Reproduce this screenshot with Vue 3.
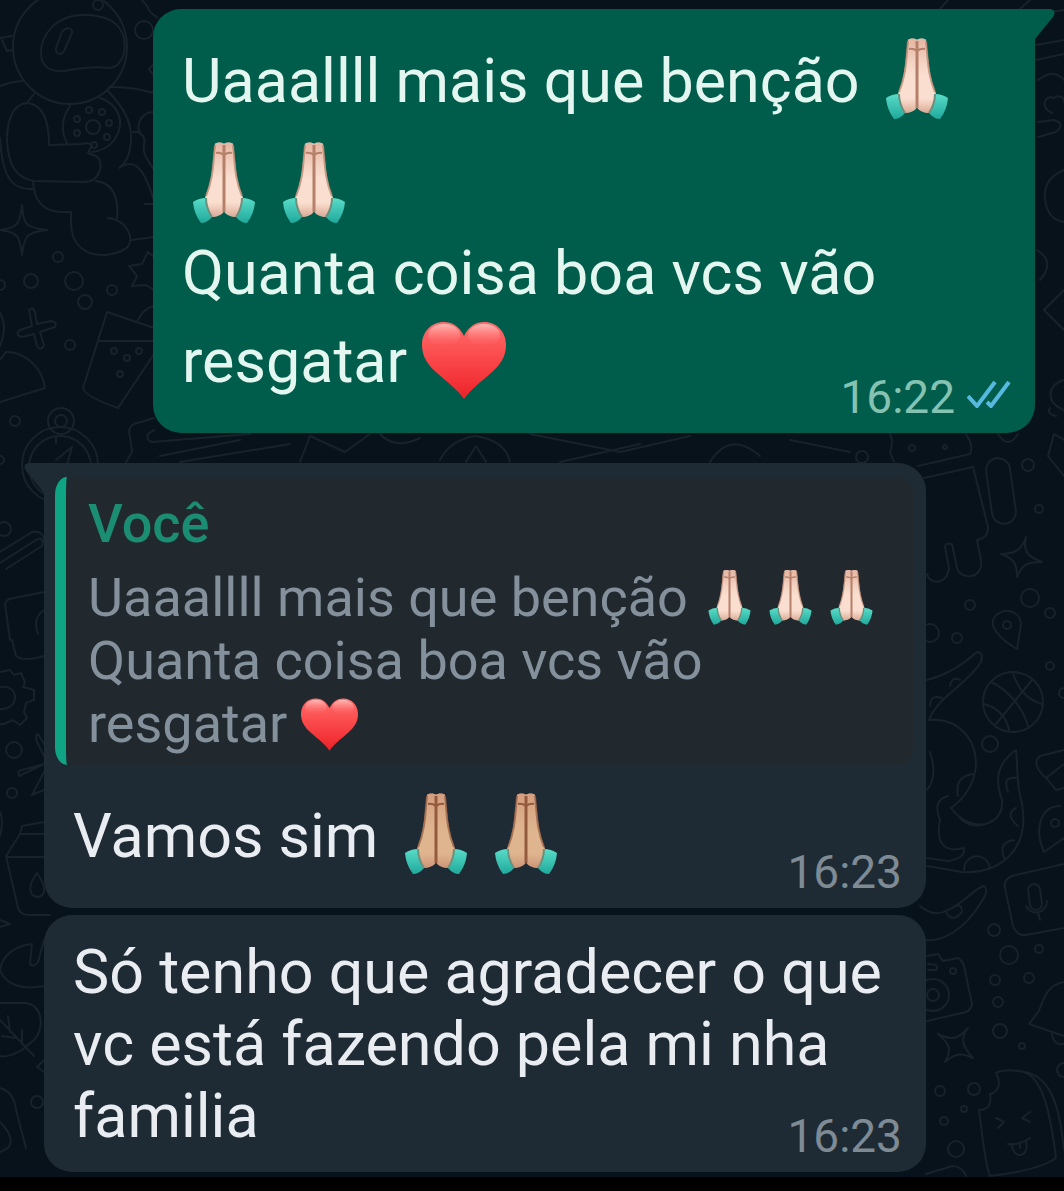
<template>
  <div class="page">
    <svg class="sprite" aria-hidden="true">
      <defs>
        <linearGradient id="cuff" x1="0" y1="0" x2="0" y2="1">
          <stop offset="0" stop-color="#5adcc8" />
          <stop offset="1" stop-color="#1fa99b" />
        </linearGradient>
        <linearGradient id="fingertips" x1="0" y1="0" x2="0" y2="1">
          <stop offset="0" stop-color="#c9826a" stop-opacity="0.45" />
          <stop offset="0.3" stop-color="#c9826a" stop-opacity="0.15" />
          <stop offset="0.5" stop-color="#c9826a" stop-opacity="0" />
          <stop offset="0.8" stop-color="#c9826a" stop-opacity="0" />
          <stop offset="1" stop-color="#b9705a" stop-opacity="0.5" />
        </linearGradient>
        <linearGradient id="heart-base" x1="0" y1="0" x2="0" y2="1">
          <stop offset="0" stop-color="#ff6d6d" />
          <stop offset="0.45" stop-color="#fb4a4c" />
          <stop offset="1" stop-color="#ec2229" />
        </linearGradient>
        <linearGradient id="heart-shine" x1="0" y1="0" x2="0" y2="1">
          <stop offset="0" stop-color="#ffc9c4" stop-opacity="0.85" />
          <stop offset="1" stop-color="#ff6d6d" stop-opacity="0" />
        </linearGradient>
      </defs>
      <symbol id="pray" viewBox="0 0 84 84">
        <g id="half-hand">
          <path
            d="M42 3 C41 1 34 1 33 3 C32 8 32 13 31 20 C30 32 28 43 24 54 L22 60 L28 76 C35 76 40 74 42 70 Z"
            fill="var(--skin)"
          />
          <path
            d="M42 3 C41 1 34 1 33 3 C32 8 32 13 31 20 C30 32 28 43 24 54 L22 60 L28 76 C35 76 40 74 42 70 Z"
            fill="url(#fingertips)"
          />
          <path d="M33 4 C31 20 32 36 24 55" fill="none" stroke="var(--crease)" stroke-width="2" opacity="0.7" />
          <path d="M34 12 Q38 11 42 14" fill="none" stroke="var(--crease)" stroke-width="2" />
          <path d="M11 61 Q17 57 24 57 Q24 67 30 76 Q25 82 19 82 Q12 73 11 61 Z" fill="url(#cuff)" />
          <path d="M24 57 Q24 67 30 76" fill="none" stroke="#6d8f7c" stroke-width="2" />
        </g>
        <use href="#half-hand" transform="translate(84 0) scale(-1 1)" />
        <path d="M42 4 V71" fill="none" stroke="var(--crease)" stroke-width="3" />
      </symbol>
      <symbol id="heart" viewBox="0 0 84 84">
        <path
          d="M42 19 C37 9 30 5 22 5 C9 5 0 15 0 28 C0 40 6 48 15 56 C24 64 36 73 42 82 C48 73 60 64 69 56 C78 48 84 40 84 28 C84 15 75 5 62 5 C54 5 47 9 42 19 Z"
          fill="url(#heart-base)"
        />
        <ellipse cx="22" cy="18" rx="16" ry="11" fill="url(#heart-shine)" />
        <ellipse cx="62" cy="18" rx="16" ry="11" fill="url(#heart-shine)" />
      </symbol>
    </svg>

    <main class="chat">
      <svg class="wallpaper" viewBox="0 0 1064 1177" preserveAspectRatio="xMinYMin slice" aria-hidden="true">
        <!-- astronaut -->
        <circle cx="70" cy="47" r="57" />
        <path
          d="M84 15 C55 15 40 36 41 55 C42 68 52 72 64 71 C80 68 95 66 108 68 C120 68 127 55 124 38 C120 22 105 15 84 15 Z"
        />
        <path d="M62 32 C66 27 73 27 72 33 L64 51 C61 56 55 54 56 48 Z" />
        <path d="M0 38 L12 36 M2 40 L7 51 L12 50 M0 86 Q10 82 22 81 M109 87 Q130 86 154 93" />
        <path d="M34 94 L27 103 M107 90 C122 106 132 120 131 140 C130 156 126 163 119 168" />
        <path
          d="M49 145 C49 118 42 104 27 103 C12 104 7 122 7 140 C8 165 16 178 34 181 L85 182 C102 181 104 160 96 156 L88 153 L92 145 Q88 142 82 144 Z"
        />
        <path d="M0 138 C2 170 8 190 32 189 M33 181 C34 202 44 211 60 212 H71 V220 C70 246 86 256 106 255 C126 252 132 246 130 236 C126 222 116 219 108 218" />
        <path d="M96 181 C112 183 119 196 117 218 M120 167 C138 156 146 176 154 200 M132 240 L154 237 M145 204 H154" />
        <path d="M70 106 C60 120 62 134 67 143 M92 152 C112 150 121 134 120 120 C118 110 112 102 100 98" />
        <circle v-for="(c, i) in buttons" :key="'b' + i" :cx="c[0]" :cy="c[1]" :r="c[2]" />
        <path d="M154 112 C140 112 136 126 140 134 Q146 136 144 145 C142 154 148 160 154 170 M140 132 L133 132" />
        <path d="M142 0 Q148 6 150 12 L158 18 M154 64 L149 69 L154 76" />
        <!-- sparkles -->
        <path d="M22 205 C23 222 24 228 47 230 C25 232 24 238 22 255 C20 238 19 232 0 230 C19 228 20 222 22 205 Z" />
        <path d="M1026 537 C1023 550 1026 556 1042 562 C1028 562 1022 564 1017 577 C1017 564 1014 558 1001 554 C1014 554 1022 550 1026 537 Z" />
        <path d="M968 1028 C960 1038 962 1046 973 1058 C961 1052 954 1054 945 1062 C952 1050 950 1044 938 1034 C950 1040 958 1040 968 1028 Z" />
        <path d="M29 310 Q33 306 35 312 L37 324 L51 321 Q58 322 55 327 L40 332 L44 345 Q41 352 37 346 L34 334 L22 337 Q14 335 20 330 L32 326 Z" />
        <path d="M154 257 L148 252 L142 264 L129 266 L137 276 L132 286 L146 285 L154 290" />
        <!-- glass -->
        <path d="M154 328 L107 312 L83 388 Q84 396 118 408 L154 354 M99 341 H154 M138 320 Q144 308 154 306" />
        <path d="M0 313 Q8 326 0 346 M0 360 L6 352 C24 352 42 366 45 388 L0 402" />
        <!-- compass -->
        <circle cx="60" cy="465" r="38" />
        <circle cx="60" cy="467" r="31" />
        <circle cx="61" cy="421" r="13" />
        <circle cx="61" cy="421" r="6" />
        <path d="M56 460 L72 447 L66 468 M56 437 V443" />
        <path d="M154 418 L134 424 Q127 428 130 436 L132 452 L126 462 M154 430 L148 434 Q146 440 152 442 L250 434 M160 456 L240 440 M180 462 L290 444" />
        <path d="M300 462 L310 436 L345 452 L370 434 M380 434 Q395 450 420 438 M440 460 Q450 440 475 436 Q505 440 510 462 M466 462 L476 446 L486 462" />
        <path d="M530 434 L620 452 L690 436 M560 462 L640 444 M710 462 Q730 430 760 456 M790 440 L850 452" />
        <path d="M890 434 Q894 442 890 452 L894 462 M966 434 Q974 446 970 454 L918 466 M924 478 L973 467 L988 527 C988 536 984 538 977 540 L981 560 C984 580 960 580 957 568 L952 544 Q946 542 945 547 L949 568 C948 584 930 586 927 574" />
        <rect x="989" y="458" width="24" height="66" rx="12" transform="rotate(-8 1001 491)" />
        <path d="M1064 440 L1054 434 L1048 456 L1064 476 M998 434 Q1008 450 1018 434" />
        <!-- right edge -->
        <path d="M940 9 L948 0 M1020 9 L1030 0 M1036 14 L1064 10 M1036 45 L1064 40 M1036 60 L1064 54 M1038 80 Q1054 68 1064 80" />
        <path d="M1052 113 C1040 108 1044 94 1054 98 C1058 94 1066 98 1064 102 M1038 122 L1054 120 Q1066 124 1056 132 L1038 137" />
        <path d="M1064 170 Q1040 180 1046 205 Q1050 220 1064 222 M1037 250 Q1056 262 1040 280 M1064 290 L1044 310 L1064 330 M1064 380 C1046 385 1046 404 1064 410 M1050 408 Q1046 414 1056 416" />
        <!-- left edge -->
        <path d="M0 563 L36 540 Q44 536 42 546 L6 569 M0 552 L32 532 Q44 530 44 542 M10 640 L5 604 Q6 599 14 598 L44 592 M44 610 Q32 618 38 634" />
        <path d="M12 640 L16 656 Q24 662 44 656 M0 672 L10 670 L14 675 L21 673 L25 682 L23 687 L34 690 V700 L26 703 L24 712 L27 718 L20 725 L13 720 L4 724 H0" />
        <path d="M0 687 C20 684 20 710 0 709 M44 744 L38 734 Q34 736 38 744 L44 756 M44 764 L19 776 Q17 770 22 770 L44 764 M44 772 L32 795 L44 790" />
        <path d="M44 822 L22 826 L20 834 L6 856 L18 908 Q20 915 30 915 H50 M20 834 H44 M6 857 H44 M37 873 C28 885 28 895 37 897 C47 896 46 886 37 873 Z M0 812 Q4 820 0 836" />
        <path d="M0 920 L10 924 L0 927 M44 940 L38 962 Q34 968 30 964 L32 944 C14 946 2 956 0 970 C6 986 24 990 44 986" />
        <path d="M0 1003 H26 C44 1006 44 1030 34 1040 L22 1050 Q8 1058 0 1056 M0 1020 L34 1056 M10 1032 L8 1016 M16 1038 L2 1036 M22 1044 V1030 M44 1060 L37 1067 L44 1072" />
        <path d="M0 1088 Q14 1092 16 1110 L26 1148 M0 1122 Q16 1138 8 1148 L0 1152" />
        <!-- pin, ball -->
        <path d="M1017 649 C995 636 990 624 994 618 C1002 606 1020 610 1021 624 Z" />
        <circle cx="1013" cy="702" r="30" />
        <path d="M991 682 C1008 690 1022 706 1028 726 M1013 673 C1018 690 1028 700 1042 704 M1032 680 L996 724 M984 704 C998 708 1006 716 1009 730" />
        <!-- octopus -->
        <path d="M927 680 C950 674 966 662 977 652 Q984 652 981 662 C968 684 938 696 929 720 C955 717 976 736 976 765 C974 788 962 800 951 808" />
        <path d="M951 808 C970 834 1004 828 1002 800 C995 780 996 764 1016 750 C1018 768 1016 784 1022 804 C1030 850 1000 874 962 872 L927 866" />
        <path d="M927 790 Q938 776 930 752 M940 820 C936 840 942 854 964 848 Q966 858 948 861 L927 858 M960 818 Q974 832 994 820" />
        <path d="M930 706 Q930 694 942 698 M950 686 Q952 676 960 680 M958 796 Q954 776 974 774 M940 820 Q932 800 948 796 M1008 792 Q1002 776 1016 778 M1018 826 Q1004 814 1016 808 M964 870 C964 854 986 850 990 868 M1004 858 Q998 842 1014 840" />
        <path d="M1064 750 L1040 756 Q1030 764 1048 780 L1056 790 L1064 788 M1046 778 L1064 764 M1044 852 C1034 830 1040 806 1060 806 M1044 852 L1064 838" />
        <path d="M920 906 Q934 918 948 910 C966 902 974 888 984 886 Q990 890 980 904 C964 930 942 942 926 940 M946 912 Q952 924 962 912 Q962 904 956 906" />
        <!-- mic card -->
        <path d="M1064 864 L1012 876 Q1003 880 1005 888 L1013 926 Q1017 936 1026 935 L1064 928" />
        <rect x="1029" y="884" width="12" height="26" rx="6" transform="rotate(-8 1035 897)" />
        <path d="M1026 906 C1032 916 1046 914 1047 901 M1038 913 L1040 920" />
        <!-- camera -->
        <path d="M927 956 L938 954 L943 961 L958 958 Q962 960 964 966 L972 1004 Q971 1010 966 1012 L927 1021 M928 964 Q940 964 936 970 H928" />
        <circle cx="933" cy="995" r="16" />
        <circle cx="933" cy="995" r="6" />
        <path d="M1064 982 C1044 986 1044 1002 1038 1012 L1029 1024 L1064 1036 M1052 1034 Q1054 1046 1064 1044" />
        <!-- ice cream sandwich -->
        <path d="M996 1073 Q1006 1068 1024 1072 C1042 1078 1050 1110 1056 1158 Q1040 1170 990 1176 C984 1160 982 1130 979 1110 C988 1110 992 1104 990 1094 C998 1092 1002 1084 996 1073 Z" />
        <path d="M1024 1072 C1052 1076 1060 1110 1064 1150 M996 1118 L1004 1122 L998 1128 M1030 1112 L1022 1118 L1030 1122 M1008 1144 Q1018 1146 1030 1138 M1012 1144 C1012 1160 1030 1158 1026 1142 M1020 1148 V1142" />
        <path d="M926 1174 L952 1166 Q962 1166 966 1176" />
        <circle v-for="(c, i) in bubbles" :key="'c' + i" :cx="c[0]" :cy="c[1]" :r="c[2]" />
      </svg>

      <article
        v-for="msg in messages"
        :key="msg.id"
        class="bubble"
        :class="[msg.sent ? 'sent' : 'received', { tailed: msg.tail }]"
      >
        <svg v-if="msg.tail" class="tail" viewBox="0 0 22 32" aria-hidden="true">
          <path d="M0 0 H16 Q22 2 18 8 L0 30 Z" />
        </svg>

        <blockquote v-if="msg.quote" class="quote">
          <cite class="author">{{ msg.quote.author }}</cite>
          <p v-for="(line, i) in msg.quote.lines" :key="i">
            {{ line.text
            }}<svg v-for="(e, n) in line.emoji" :key="n" class="emoji" :class="e" role="img" :aria-label="labels[e]">
              <use :href="shapes[e]" />
            </svg>
          </p>
        </blockquote>

        <div class="body">
          <p v-for="(line, i) in msg.lines" :key="i" :class="line.size">
            {{ line.text
            }}<svg v-for="(e, n) in line.emoji" :key="n" class="emoji" :class="e" role="img" :aria-label="labels[e]">
              <use :href="shapes[e]" />
            </svg>
          </p>
        </div>

        <div class="meta">
          <time>{{ msg.time }}</time>
          <svg v-if="msg.sent" class="ticks" viewBox="0 0 44 28" role="img" aria-label="Lida">
            <path d="M1 16 L10 26 L28 2 M20 22 L24 26 L42 2" />
          </svg>
        </div>
      </article>
    </main>
    <div class="bottom-bar"></div>
  </div>
</template>

<script setup>
const shapes = { light: "#pray", medium: "#pray", heart: "#heart" };
const labels = { light: "🙏🏻", medium: "🙏🏼", heart: "❤️" };

const messages = [
  {
    id: 1,
    sent: true,
    tail: true,
    time: "16:22",
    lines: [
      { text: "Uaaallll mais que benção ", emoji: ["light", "light", "light"], size: "tall" },
      { text: "Quanta coisa boa vcs vão resgatar ", emoji: ["heart"], size: "medium-line" },
    ],
  },
  {
    id: 2,
    tail: true,
    time: "16:23",
    quote: {
      author: "Você",
      lines: [
        { text: "Uaaallll mais que benção ", emoji: ["light", "light", "light"] },
        { text: "Quanta coisa boa vcs vão resgatar ", emoji: ["heart"] },
      ],
    },
    lines: [{ text: "Vamos sim ", emoji: ["medium", "medium"], size: "tall" }],
  },
  {
    id: 3,
    time: "16:23",
    lines: [{ text: "Só tenho que agradecer o que vc está fazendo pela mi nha familia", emoji: [] }],
  },
];

// [cx, cy, r]
const buttons = [
  [93, 127, 7], [89, 110, 3], [102, 112, 3], [109, 123, 3],
  [107, 137, 3], [94, 145, 3], [77, 133, 3], [77, 119, 3],
];

const bubbles = [
  [144, 30, 9], [58, 257, 5], [31, 281, 7], [74, 281, 9], [85, 302, 7], [112, 290, 5],
  [0, 285, 5], [70, 345, 5], [114, 351, 3], [127, 358, 3], [139, 351, 3], [120, 374, 3],
  [15, 421, 5], [0, 460, 4], [4, 529, 7], [14, 750, 8], [12, 793, 5], [37, 1102, 6], [50, 1138, 5],
  [945, 447, 2], [1028, 465, 6], [1039, 509, 4], [970, 605, 5], [1030, 598, 9], [1050, 613, 5],
  [930, 633, 9], [957, 638, 5], [1007, 625, 4], [1050, 666, 4], [1064, 693, 5], [990, 744, 8],
  [1055, 823, 4], [994, 930, 6], [1009, 955, 9], [1039, 949, 4], [995, 980, 5], [1029, 978, 5],
  [953, 971, 3], [998, 1002, 5], [1000, 1031, 7], [1022, 1046, 3], [1064, 1070, 7],
  [940, 1091, 5], [974, 1089, 6], [964, 1109, 3], [944, 1121, 4], [956, 1149, 8],
  [98, 5, 5], [862, 457, 6], [912, 448, 3],
];
</script>

<style>
body {
  margin: 0;
  background: #000;
}
</style>

<style scoped>
.page {
  font-family: Roboto, "Noto Sans", sans-serif;
  background: #000;
}

.sprite {
  position: absolute;
  width: 0;
  height: 0;
}

.chat {
  position: relative;
  display: flex;
  flex-direction: column;
  padding: 9px 29px 5px 44px;
  background: #08121a;
  overflow: hidden;
}

.wallpaper {
  position: absolute;
  inset: 0;
  width: 100%;
  height: 100%;
  fill: none;
  stroke: #17222a;
  stroke-width: 2;
  stroke-linejoin: round;
  stroke-linecap: round;
}

.bubble {
  position: relative;
  box-sizing: border-box;
  display: flex;
  flex-direction: column;
  width: 89%;
  margin-top: 7px;
  padding-bottom: 12px;
  border-radius: 28px;
  color: #e9edf2;
}

.sent {
  align-self: flex-end;
  margin-top: 0;
  background: #015d4b;
  border-top-right-radius: 0;
  color: #e4f6f0;
}

.received {
  background: #1f2b34;
}

.received.tailed {
  margin-top: 30px;
  border-top-left-radius: 0;
}

.tail {
  position: absolute;
  top: 0;
  left: 100%;
  width: 22px;
  height: 32px;
  fill: #015d4b;
}

.received .tail {
  left: auto;
  right: 100%;
  transform: scaleX(-1);
  fill: #1f2b34;
}

p {
  margin: 0;
}

.body {
  padding: 21px 29px 0;
  font-size: 61px;
  line-height: 72px;
}

.sent .body {
  padding-top: 20px;
}

.tall {
  line-height: 104px;
}

.medium-line {
  margin: -8px 0 8px;
  line-height: 88px;
}

.quote {
  margin: 14px 13px 0 11px;
  padding: 15px 22px 10px;
  border-left: 11px solid #0fa584;
  border-radius: 12px / 18px;
  background: #21292e;
  color: #84919c;
  font-size: 54px;
  line-height: 63px;
}

.author {
  display: block;
  margin-bottom: 11px;
  font-style: normal;
  font-weight: 500;
  color: #1a8d72;
}

.emoji {
  width: 84px;
  height: 84px;
  margin-right: 6px;
  vertical-align: -19px;
}

.quote .emoji {
  width: 57px;
  height: 57px;
  margin-right: 4px;
  vertical-align: -10px;
}

.light {
  --skin: #fadfd0;
  --crease: #b5806a;
}

.medium {
  --skin: #deb58f;
  --crease: #935a3e;
}

.meta {
  display: flex;
  align-items: center;
  align-self: flex-end;
  gap: 12px;
  margin: -40px 24px 0 0;
  font-size: 46px;
  line-height: 48px;
  color: #7f8b94;
}

.sent .meta {
  color: #86c2b2;
}

.quote + .body {
  padding-top: 19px;
}

.ticks {
  width: 44px;
  height: 28px;
  margin-bottom: 6px;
  fill: none;
  stroke: #55b9e0;
  stroke-width: 4;
}

.bottom-bar {
  height: 14px;
  background: #000;
}
</style>
